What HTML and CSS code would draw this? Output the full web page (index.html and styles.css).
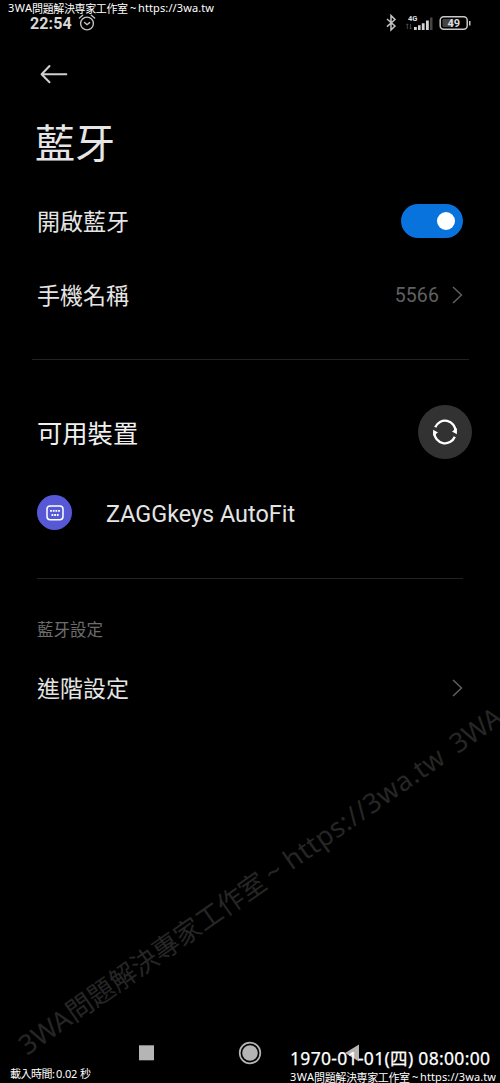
FILE: index.html
```html
<!DOCTYPE html>
<html lang="zh-Hant">
<head>
<meta charset="utf-8">
<title>藍牙</title>
<link rel="stylesheet" href="styles.css">
</head>
<body>
<main class="screen">
  <header class="status">
    <span class="clock">22:54</span>
    <svg class="alarm" width="18" height="18" viewBox="0 0 18 18" fill="none" stroke="#c4c4c4" stroke-width="1.4" stroke-linecap="round"><circle cx="9" cy="9.5" r="6.4"/><path d="M1.4 4 4.7 1.3M16.6 4 13.3 1.3M6.6 8.5 9 10.7 11.6 8.6"/></svg>
    <svg class="signals" width="86" height="20" viewBox="0 0 86 20">
      <path d="M1 6 9 13 5 16.9V2.6L9 6.5 1 13.6" fill="none" stroke="#c4c4c4" stroke-width="1.5"/>
      <text class="network" x="22" y="8">4G</text>
      <path d="M21.3 11v5M20.3 12l1-1.2 1 1.2M24.5 11v5M23.5 14.8l1 1.2 1-1.2" fill="none" stroke="#555" stroke-width=".8"/>
      <path d="M28 14h2.8v3H28zM32 12.3h2.6V17H32zM35.8 10.2h2.8V17h-2.8zM40 7.5h2.8V17H40z" fill="#d4d4d4"/>
      <path d="M44 4.5h2.5V17H44z" fill="#444"/>
      <rect x="54.2" y="3.7" width="27" height="12.6" rx="3.5" fill="none" stroke="#c8c8c8" stroke-width="1.5"/>
      <rect x="56.5" y="6" width="11" height="8" rx="1" fill="#444"/>
      <path d="M83 8h1.5v4.4H83z" fill="#c8c8c8"/>
      <text class="level" x="67.8" y="13.9" text-anchor="middle">49</text>
    </svg>
  </header>
  <div class="toolbar">
    <svg width="28" height="20" viewBox="0 0 28 20" fill="none" stroke="#d0d0d0" stroke-width="2" stroke-linecap="round" stroke-linejoin="round"><path d="M26.3 10.3H2M9.5 2 1.6 10.3 9.5 18.2"/></svg>
  </div>
  <h1 class="title">藍牙</h1>
  <div class="row toggle-row"><span class="label">開啟藍牙</span><span class="toggle"><i class="knob"></i></span></div>
  <div class="row name-row"><span class="label">手機名稱</span><span class="value">5566</span><svg class="chevron" width="11" height="18" viewBox="0 0 11 18"><path d="M1 1 9.5 9 1 17"/></svg></div>
  <hr class="rule wide">
  <div class="row devices"><span class="label heading">可用裝置</span>
    <span class="refresh"><svg width="26" height="26" viewBox="0 0 26 26" fill="none" stroke="#fff" stroke-width="2.3"><path d="M3.2 8.3A10.6 10.6 0 0 1 23.6 12.5M22.8 17.7A10.6 10.6 0 0 1 2.4 13.5"/><path d="M24.9 9v6.3L20 12.5zM1.1 17v-6.3L6 13.5z" fill="#fff" stroke="none"/></svg></span>
  </div>
  <div class="row device">
    <span class="badge"><svg width="18" height="16" viewBox="0 0 18 16"><rect x="1" y="1" width="16" height="13.8" rx="3.2" fill="none" stroke="#fff" stroke-width="1.5"/><path d="M4.1 5.9h9.8M5.5 10h7.2" stroke="#fff" stroke-width="1.8" stroke-dasharray="1.8 .87"/></svg></span>
    <span class="device-name">ZAGGkeys AutoFit</span>
  </div>
  <hr class="rule">
  <h2 class="section">藍牙設定</h2>
  <div class="row advanced"><span class="label">進階設定</span><svg class="chevron" width="11" height="18" viewBox="0 0 11 18"><path d="M1 1 9.5 9 1 17"/></svg></div>
  <nav class="nav">
    <svg width="222" height="24" viewBox="0 0 222 24"><path d="M1 4.3h15v15H1z" fill="#b5b5b5"/><circle cx="112" cy="12" r="10.3" fill="none" stroke="#b5b5b5" stroke-width="1.7"/><circle cx="112" cy="12" r="7.8" fill="#b5b5b5"/><path d="M221 3.5v17L207 12z" fill="#b5b5b5"/></svg>
  </nav>
</main>
<svg class="watermark" width="500" height="1083" viewBox="0 0 500 1083">
  <g transform="translate(27 1056) rotate(-35)">
    <text x="0" y="0" textLength="57" lengthAdjust="spacingAndGlyphs">3WA</text>
    <text x="58" y="0" textLength="237" lengthAdjust="spacingAndGlyphs">問題解決專家工作室</text>
    <text x="300" y="0" textLength="17">~</text>
    <text x="323" y="0" textLength="190">https://3wa.tw</text>
    <text x="526" y="0" textLength="57" lengthAdjust="spacingAndGlyphs">3WA</text>
  </g>
</svg>
<svg class="stamp" width="500" height="1083" viewBox="0 0 500 1083">
  <g class="small">
    <text x="8" y="12" textLength="24">3WA</text><text x="32" y="12.5" textLength="96">問題解決専家工作室</text><text x="130" y="12">~</text><text x="138" y="12" textLength="76">https://3wa.tw</text>
    <text x="10" y="1078" textLength="45">載入時間:</text><text x="56" y="1078" textLength="35">0.02 秒</text>
    <text x="290" y="1081" textLength="24">3WA</text><text x="314" y="1081.5" textLength="96">問題解決専家工作室</text><text x="412" y="1081">~</text><text x="420" y="1081" textLength="76">https://3wa.tw</text>
  </g>
  <text class="date" x="290" y="1065" textLength="200">1970-01-01(四) 08:00:00</text>
</svg>
</body>
</html>
```
FILE: styles.css
```css
* { box-sizing: border-box; }
body { margin: 0; background: #000; color: #e4e4e4; font-family: Roboto, "Noto Sans CJK TC", sans-serif; }
.screen { position: relative; width: 500px; height: 1083px; overflow: hidden; display: flex; flex-direction: column; padding: 13px 37px 0; }
.status { display: flex; align-items: center; height: 20px; margin-left: -7px; flex: none; }
.clock { font-size: 16px; font-weight: 700; color: #d8d8d8; width: 42px; letter-spacing: .1px; }
.alarm { margin-left: 6px; }
.signals { margin-left: auto; margin-right: -9px; }
.network { font-size: 7.5px; font-weight: 700; fill: #ddd; }
.level { font-size: 11px; font-weight: 700; fill: #ddd; }
.toolbar { height: 42px; padding: 31px 0 0 3px; flex: none; }
.toolbar svg { display: block; }
.title { margin: 41px 0 0 -2px; height: 58px; flex: none; font-size: 40px; line-height: 58px; font-weight: 400; color: #e6e6e6; }
.row { display: flex; align-items: center; flex: none; font-size: 23px; line-height: 34px; }
.label { padding-top: 3px; }
.heading { padding-top: 5px; }
.toggle-row { height: 34px; margin-top: 30px; }
.toggle { margin-left: auto; width: 62px; height: 34px; padding: 8px 8px 0 0; border-radius: 17px; background: #0873dc; display: flex; justify-content: flex-end; }
.knob { width: 18px; height: 18px; border-radius: 50%; background: #fff; }
.name-row { height: 34px; margin-top: 40px; }
.value { margin-left: auto; font-size: 19.5px; color: #606060; padding-top: 2px; margin-right: 13px; letter-spacing: .1px; }
.chevron { fill: none; stroke: #626262; stroke-width: 1.4; }
.rule { border: 0; height: 1px; background: #222; width: 100%; margin: 47px 0 0; flex: none; }
.wide { width: 437px; margin: 47px 0 0 -5px; }
.devices { height: 54px; margin-top: 45px; font-size: 25.3px; color: #f0f0f0; }
.refresh { margin-left: auto; margin-right: -9px; width: 54px; height: 54px; border-radius: 50%; background: #323232; display: flex; align-items: center; justify-content: center; }
.device { height: 36px; margin-top: 36px; }
.badge { width: 35px; height: 35px; margin-top: -1px; border-radius: 50%; background: #5658d5; display: flex; align-items: center; justify-content: center; }
.device-name { margin-left: 34px; font-size: 23.4px; padding-top: 2px; }
.section { margin: 40px 0 0; font-size: 16.5px; line-height: 24px; height: 24px; font-weight: 400; color: #6c6c6c; flex: none; }
.advanced { height: 34px; margin-top: 28px; }
.advanced .chevron { margin-left: auto; }
.nav { height: 24px; margin: auto 0 18px 101px; flex: none; }
.nav svg { display: block; }
.watermark, .stamp { position: absolute; left: 0; top: 0; }
.watermark { font: 27px "Noto Sans", "Noto Sans CJK TC", sans-serif; fill: #262626; }
.stamp { fill: #fff; font-family: "Noto Sans", "Noto Sans CJK TC", sans-serif; }
.small { font-size: 11px; }
.date { font-size: 17.5px; font-weight: 400; stroke: #fff; stroke-width: .25px; }
```
